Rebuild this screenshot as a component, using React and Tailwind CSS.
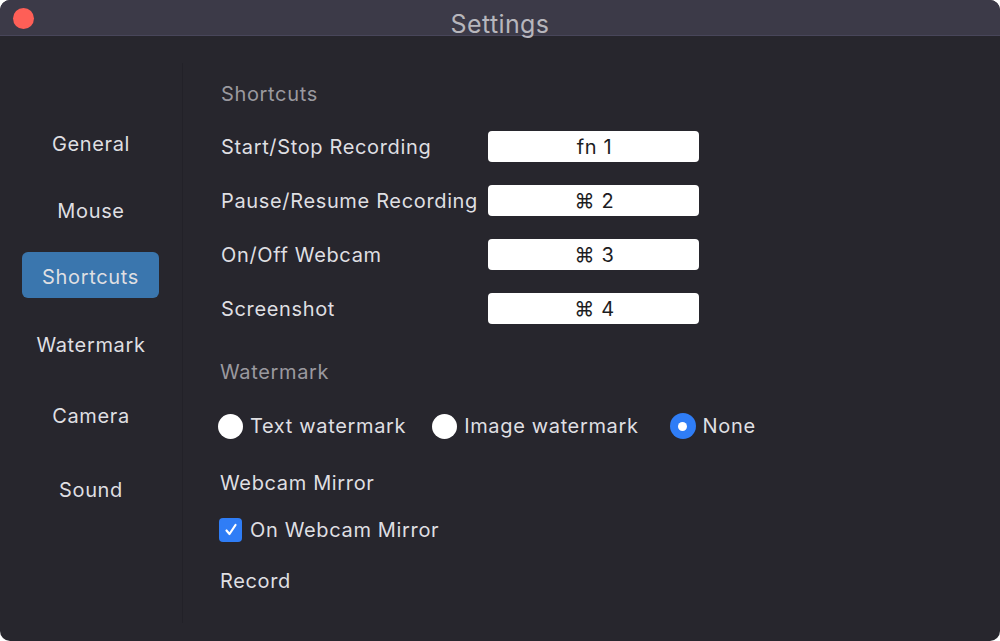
import React from "react";

const font = { fontFamily: "Inter, 'Noto Sans', 'Liberation Sans', sans-serif" };

function Radio({ checked, label, className = "" }) {
  return (
    <div className={"flex items-center gap-[7px] " + className}>
      {checked ? (
        <div className="w-[26px] h-[26px] rounded-full bg-[#2f7df6] flex items-center justify-center">
          <div className="w-[9px] h-[9px] rounded-full bg-white" />
        </div>
      ) : (
        <div className="w-[25px] h-[25px] rounded-full bg-white" />
      )}
      <span>{label}</span>
    </div>
  );
}

function ShortcutRow({ label, keys }) {
  return (
    <div className="flex items-center h-[31px]">
      <div className="w-[268px] pl-px">{label}</div>
      <div className="w-[211px] h-[31px] bg-white rounded-[4px] flex items-center justify-center text-[#1d1d1f] text-[20px] pl-[2px]">
        {keys}
      </div>
    </div>
  );
}

export default function App() {
  return (
    <div className="w-[1000px] h-[641px] bg-white" style={font}>
      <div className="w-[1000px] h-[641px] rounded-[10px] overflow-hidden bg-[#27262d] flex flex-col">
        <div className="relative h-[36px] bg-[#3c3a48] border-b border-[#48465a] shrink-0">
          <div className="absolute left-[13px] top-[8px] w-[21px] h-[21px] rounded-full bg-[#fe5f57]" />
          <div className="absolute left-0 right-0 top-[10px] text-center text-[25px] leading-[28px] tracking-[0.4px] text-[#b7b6bc]">
            Settings
          </div>
        </div>
        <div className="flex flex-1 text-[20px] tracking-[0.65px] text-[#dfdfe2]">
          <div className="w-[182px] shrink-0 flex flex-col items-center">
            <div className="mt-[85px] h-[46px] flex items-center">General</div>
            <div className="mt-[21px] h-[46px] flex items-center">Mouse</div>
            <div className="mt-[18px] h-[46px] w-[137px] ml-[-1px] rounded-[6px] bg-[#3a76ae] flex items-center justify-center pt-[3px]">
              Shortcuts
            </div>
            <div className="mt-[24px] h-[46px] flex items-center">Watermark</div>
            <div className="mt-[25px] h-[46px] flex items-center">Camera</div>
            <div className="mt-[28px] h-[46px] flex items-center">Sound</div>
          </div>
          <div className="w-px bg-[#222128] mt-[27px] mb-[18px]" />
          <div className="flex-1 flex flex-col pl-[37px]">
            <div className="mt-[44px] h-[28px] flex items-center text-[#9a999f] pl-px">Shortcuts</div>
            <div className="mt-[23px] flex flex-col gap-[23px]">
              <ShortcutRow label="Start/Stop Recording" keys="fn 1" />
              <ShortcutRow label="Pause/Resume Recording" keys="⌘ 2" />
              <ShortcutRow label="On/Off Webcam" keys="⌘ 3" />
              <ShortcutRow label="Screenshot" keys="⌘ 4" />
            </div>
            <div className="mt-[34px] h-[28px] flex items-center text-[#9a999f]">Watermark</div>
            <div className="mt-[26px] h-[28px] flex items-center ml-[-2px]">
              <Radio label="Text watermark" />
              <Radio label="Image watermark" className="ml-[26px]" />
              <Radio checked label="None" className="ml-[31px]" />
            </div>
            <div className="mt-[29px] h-[28px] flex items-center">Webcam Mirror</div>
            <div className="mt-[19px] h-[28px] flex items-center gap-[8px] ml-[-1px]">
              <div className="w-[23px] h-[24px] rounded-[4px] bg-[#2f7df6] flex items-center justify-center">
                <svg width="16" height="16" viewBox="0 0 16 16" fill="none">
                  <path d="M3.5 8.5 L6.5 12 L12.5 3" stroke="white" strokeWidth="2.2" strokeLinecap="round" strokeLinejoin="round" />
                </svg>
              </div>
              <span>On Webcam Mirror</span>
            </div>
            <div className="mt-[23px] h-[28px] flex items-center">Record</div>
          </div>
        </div>
      </div>
    </div>
  );
}
